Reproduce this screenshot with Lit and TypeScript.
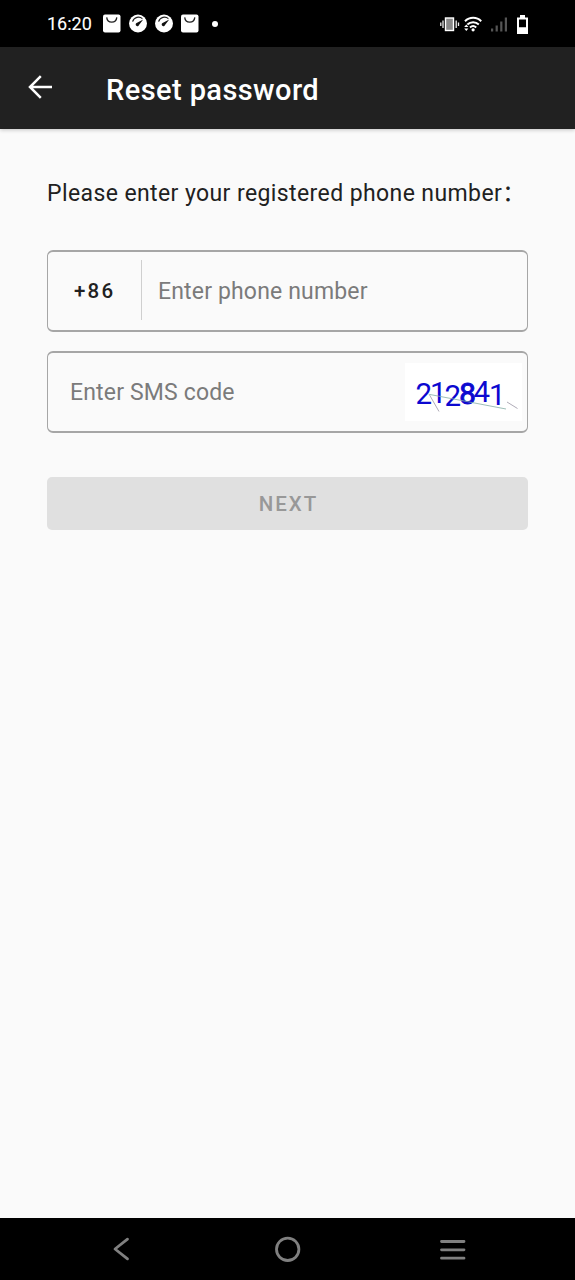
import { LitElement, html, css, svg } from "lit";
import { customElement } from "lit/decorators.js";

const bagIcon = html`<svg class="note" width="18" height="19" viewBox="0 0 18 19">
  <rect x="0" y="0.5" width="17.5" height="18" rx="2" fill="#fff" />
  <path d="M3.700 3.400C4.400 9.800 13.100 9.800 13.800 3.400" fill="none" stroke="#222" stroke-width="1.3" />
</svg>`;

const gaugeIcon = html`<svg class="note" width="18" height="19" viewBox="0 0 18 19">
  <circle cx="9" cy="9.5" r="9" fill="#fff" />
  <path d="M3.600 7.600C5 2.800 10.400 2 13.400 4.600" fill="none" stroke="#222" stroke-width="1.200" />
  <path d="M14.200 5.400L10 11A1.700 1.700 0 1 1 7.600 9Z" fill="#111" />
</svg>`;

@customElement("status-bar")
export class StatusBar extends LitElement {
  static styles = css`
    :host {
      display: flex;
      align-items: center;
      height: 47px;
      box-sizing: border-box;
      padding: 0 45px 0 47px;
      background: #000;
      color: #fff;
      font: 400 18px/22px Roboto, sans-serif;
    }
    svg { display: block; flex: none; }
    .time { width: 56px; padding-top: 1px; white-space: nowrap; -webkit-text-stroke: 0.1px #fff; }
    .note { margin-right: 8px; }
    .dot { width: 6px; height: 6px; border-radius: 50%; background: #fff; margin-left: 5px; }
    .system { margin-left: auto; }
  `;
  render() {
    return html`
      <span class="time">16:20</span>
      ${bagIcon}${gaugeIcon}${gaugeIcon}${bagIcon}
      <span class="dot"></span>
      <svg class="system" width="90" height="24" viewBox="440 11 90 24">
        <rect x="445.5" y="17" width="8" height="12.5" fill="#888" stroke="#fff" stroke-width="1.4" />
        <path d="M443 19.5v7.5M440.8 21.5v3.5M456.2 19.5v7.5M458.5 21.5v3.5" stroke="#eee" stroke-width="1.3" />
        <g fill="none" stroke="#fff" stroke-width="2">
          <path d="M465 20.2C469.5 15.6 476.8 15.6 481.2 20.2" />
          <path d="M467.4 23.5C470.5 20.5 475.7 20.5 478.8 23.5" />
          <path d="M470 26.5C471.8 24.8 474.4 24.8 476.2 26.5" />
        </g>
        <circle cx="473.1" cy="28.8" r="1.6" fill="#fff" />
        <path d="M464.200 26l2.100-2.600 2.100 2.600zM464.200 27.400h4.200l-2.100 2.600z" fill="#fff" />
        <g fill="#555">
          <rect x="491" y="27.5" width="2.2" height="3" />
          <rect x="495.6" y="24.5" width="2.2" height="6" />
          <rect x="500.2" y="20.5" width="2.2" height="10" />
          <rect x="504.8" y="16.5" width="2.2" height="14" />
        </g>
        <path d="M520 14h5v2.5h3V33h-11V16.500h3zM519 18.500v7.800h7v-7.800z" fill="#fff" fill-rule="evenodd" />
      </svg>
    `;
  }
}

interface Glyph { char: string; x: number; y: number; bold?: boolean }

const CAPTCHA: Glyph[] = [
  { char: "2", x: 10.5, y: 41 },
  { char: "1", x: 25, y: 39.500 },
  { char: "2", x: 39.500, y: 42.500 },
  { char: "8", x: 54.300, y: 40.500, bold: true },
  { char: "4", x: 68.500, y: 39 },
  { char: "1", x: 84, y: 42 },
];

@customElement("captcha-code")
export class CaptchaCode extends LitElement {
  static styles = css`
    :host { display: block; width: 117px; height: 58px; background: #fff; }
    svg { display: block; }
    text { font: 400 29.500px Roboto, sans-serif; fill: #0c08d0; }
    .bold { stroke: #0c08d0; stroke-width: 1px; }
  `;
  render() {
    return html`<svg width="117" height="58" viewBox="0 0 117 58">
      ${CAPTCHA.map((g) => svg`<text class=${g.bold ? "bold" : ""} x=${g.x} y=${g.y}>${g.char}</text>`)}
      <path d="M24 31L34 48.500" stroke="#9a95a4" stroke-width="0.8" />
      <path d="M25 31.500L101 46" stroke="#84ada4" stroke-width="0.8" />
      <path d="M102 39L112.500 45.500" stroke="#9a95a4" stroke-width="0.8" />
    </svg>`;
  }
}

@customElement("app-root")
export class AppRoot extends LitElement {
  static styles = css`
    :host {
      display: flex;
      flex-direction: column;
      height: 1280px;
      background: #fafafa;
      color: #212121;
      font-family: Roboto, "Noto Sans CJK SC", sans-serif;
      white-space: nowrap;
      overflow: hidden;
    }
    svg { display: block; flex: none; }
    .toolbar {
      display: flex;
      align-items: center;
      height: 82px;
      padding-left: 28px;
      background: #212121;
      color: #fff;
      box-shadow: 0 1px 4px rgba(0, 0, 0, 0.22);
    }
    .back { margin-bottom: 2px; }
    .title { margin: 4px 0 0 53px; font-size: 29px; line-height: 36px; font-weight: 500; letter-spacing: 0.42px; }
    main { flex: 1; display: flex; flex-direction: column; padding: 50px 47px 0; }
    .label { font-size: 23px; line-height: 30px; letter-spacing: 0.4px; margin-bottom: 41px; }
    .field {
      display: flex;
      align-items: center;
      box-sizing: border-box;
      height: 82px;
      border: 2px solid #a6a6a6;
      border-left-width: 1.500px;
      border-right-width: 1.500px;
      border-radius: 6px;
      margin-bottom: 19px;
      color: #7b7b7b;
      font-size: 23px;
      line-height: 30px;
      letter-spacing: 0.16px;
    }
    .prefix {
      box-sizing: border-box;
      width: 94px;
      height: 60px;
      padding-left: 26px;
      margin: 0 16px 2px 0;
      border-right: 1px solid #cfcfcf;
      color: #212121;
      font-size: 20.500px;
      line-height: 62px;
      font-weight: 500;
      letter-spacing: 2.200px;
    }
    .hint { padding-top: 2px; }
    .sms { padding-left: 22px; }
    captcha-code { margin: 0 5px 0 auto; }
    .next {
      height: 53px;
      margin-top: 25px;
      border: 0;
      border-radius: 5px;
      background: #e0e0e0;
      color: #989898;
      font: 500 20.500px/54px Roboto, sans-serif;
      letter-spacing: 2px;
      padding: 0 0 0 2px;
      text-align: center;
    }
    .nav { display: flex; align-items: center; height: 62px; background: #000; }
    .nav svg { stroke: #808080; fill: none; stroke-width: 2.800; stroke-linecap: round; stroke-linejoin: round; }
    .nav-back { margin-left: 112px; }
    .nav-home { margin-left: 143px; }
    .nav-menu { margin-left: 137px; }
  `;
  render() {
    return html`
      <status-bar></status-bar>
      <header class="toolbar">
        <svg class="back" width="25" height="26" viewBox="0 0 25 26">
          <path d="M24 13H2.500M12.800 2.200L2 13L12.800 23.800" fill="none" stroke="#fff" stroke-width="2.500" />
        </svg>
        <span class="title">Reset password</span>
      </header>
      <main>
        <div class="label">Please enter your registered phone number：</div>
        <div class="field"><span class="prefix">+86</span><span class="hint">Enter phone number</span></div>
        <div class="field"><span class="hint sms">Enter SMS code</span><captcha-code></captcha-code></div>
        <button class="next" disabled>NEXT</button>
      </main>
      <nav class="nav">
        <svg class="nav-back" width="20" height="26" viewBox="0 0 20 26"><path d="M15.500 3.200L3 13L15.500 22.800" /></svg>
        <svg class="nav-home" width="26" height="26" viewBox="0 0 26 26"><circle cx="12.700" cy="13.300" r="11.200" /></svg>
        <svg class="nav-menu" width="30" height="26" viewBox="0 0 30 26"><path d="M3.500 5.500H26M3.500 13.800H26M3.500 22.200H26" /></svg>
      </nav>
    `;
  }
}
